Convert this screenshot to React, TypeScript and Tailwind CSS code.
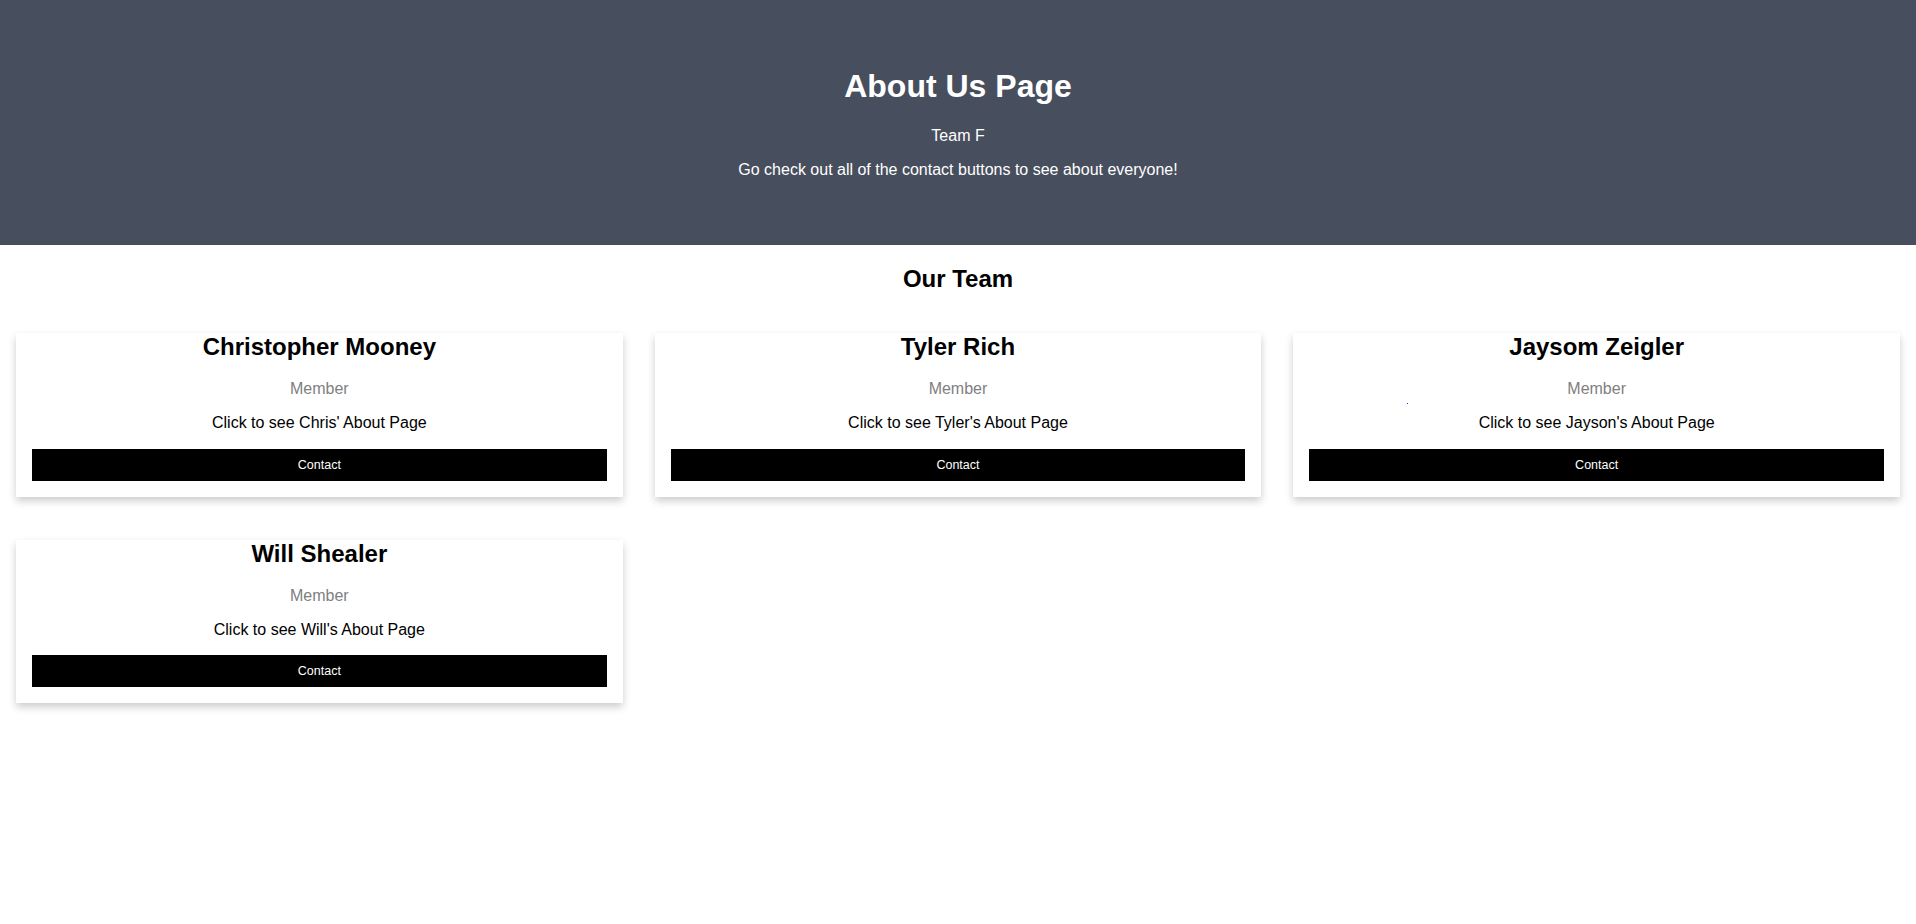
const team = [
  { name: "Christopher Mooney", blurb: "Click to see Chris' About Page" },
  { name: "Tyler Rich", blurb: "Click to see Tyler's About Page" },
  { name: "Jaysom Zeigler", blurb: "Click to see Jayson's About Page", dot: true },
  { name: "Will Shealer", blurb: "Click to see Will's About Page" },
];

function MemberCard({ name, blurb, dot }: { name: string; blurb: string; dot?: boolean }) {
  return (
    <div className="relative bg-white px-4 pb-4 text-center shadow-[0_4px_8px_0_rgba(0,0,0,0.2)]">
      <h2 className="text-2xl font-bold leading-[28px]">{name}</h2>
      <p className="mt-[19px] text-base leading-[18.4px] text-[#808080]">Member</p>
      <p className="mt-4 text-base leading-[18.4px]">{blurb}</p>
      <button className="mt-4 block w-full bg-black py-2 text-center text-[12.5px] leading-4 text-white">
        Contact
      </button>
      {dot && <span className="absolute left-[114px] top-[70px] h-[1px] w-[1px] bg-[#2030ff]" />}
    </div>
  );
}

export default function App() {
  return (
    <div className="min-h-screen bg-white font-['Liberation_Sans',Arial,sans-serif] text-black">
      <header className="bg-[#474e5d] pb-[65px] pt-[68px] text-center text-white">
        <h1 className="text-[32px] font-bold leading-[37px]">About Us Page</h1>
        <p className="mt-[22px] text-base leading-[18.4px]">Team F</p>
        <p className="mt-4 text-base leading-[18.4px]">Go check out all of the contact buttons to see about everyone!</p>
      </header>

      <h2 className="mt-5 text-center text-2xl font-bold leading-[28px]">Our Team</h2>

      <div className="mt-10 grid grid-cols-3 gap-y-[43px]">
        {team.map((m) => (
          <div key={m.name} className="px-4">
            <MemberCard name={m.name} blurb={m.blurb} dot={m.dot} />
          </div>
        ))}
      </div>
    </div>
  );
}
